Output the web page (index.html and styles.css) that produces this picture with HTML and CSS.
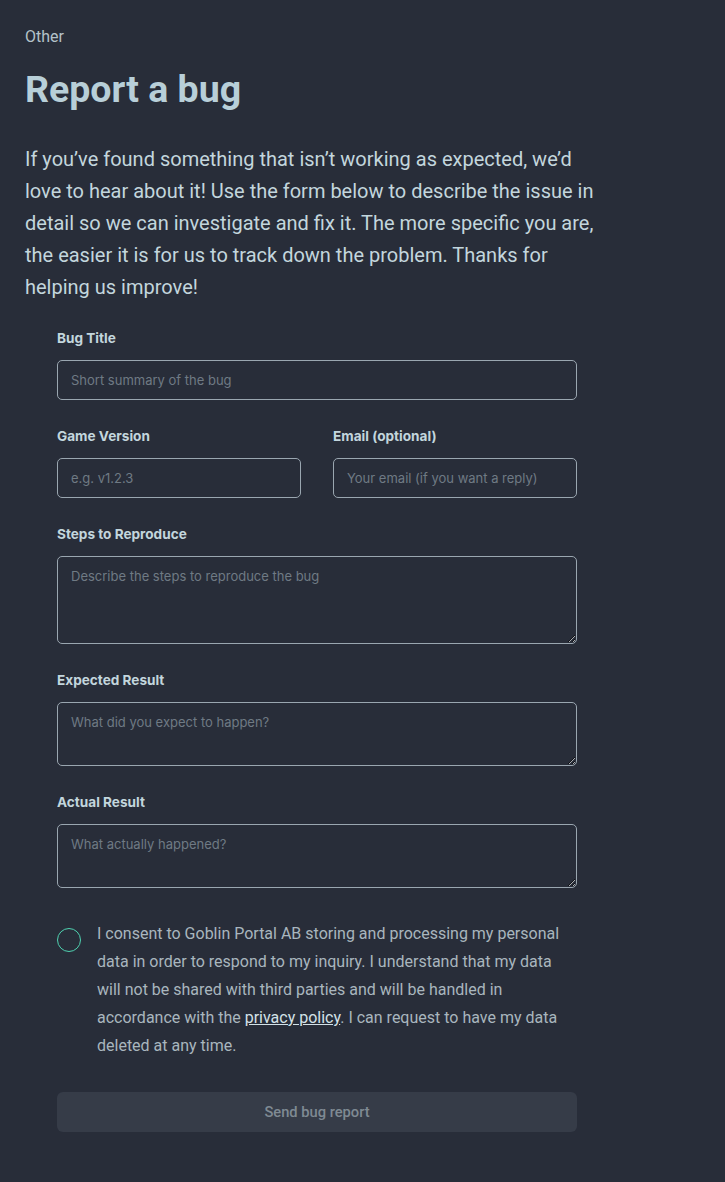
FILE: index.html
```html
<!DOCTYPE html>
<html lang="en">
<head>
<meta charset="utf-8">
<title>Report a bug</title>
<link rel="stylesheet" href="styles.css">
</head>
<body>
<main class="page">
  <p class="eyebrow">Other</p>
  <h1 class="title">Report a bug</h1>
  <p class="intro">If you’ve found something that isn’t working as expected, we’d love to hear about it! Use the form below to describe the issue in detail so we can investigate and fix it. The more specific you are, the easier it is for us to track down the problem. Thanks for helping us improve!</p>
  <form class="form">
    <div class="field">
      <label class="label" for="title">Bug Title</label>
      <input class="input" id="title" type="text" placeholder="Short summary of the bug">
    </div>
    <div class="row">
      <div class="field">
        <label class="label" for="version">Game Version</label>
        <input class="input" id="version" type="text" placeholder="e.g. v1.2.3">
      </div>
      <div class="field">
        <label class="label" for="email">Email (optional)</label>
        <input class="input" id="email" type="email" placeholder="Your email (if you want a reply)">
      </div>
    </div>
    <div class="field">
      <label class="label" for="steps">Steps to Reproduce</label>
      <textarea class="input area tall" id="steps" placeholder="Describe the steps to reproduce the bug"></textarea>
    </div>
    <div class="field">
      <label class="label" for="expected">Expected Result</label>
      <textarea class="input area" id="expected" placeholder="What did you expect to happen?"></textarea>
    </div>
    <div class="field">
      <label class="label" for="actual">Actual Result</label>
      <textarea class="input area" id="actual" placeholder="What actually happened?"></textarea>
    </div>
    <div class="consent">
      <span class="radio"></span>
      <p class="consent-text">I consent to Goblin Portal AB storing and processing my personal data in order to respond to my inquiry. I understand that my data will not be shared with third parties and will be handled in accordance with the <a href="#" class="link">privacy policy</a>. I can request to have my data deleted at any time.</p>
    </div>
    <button class="submit" type="button">Send bug report</button>
  </form>
</main>
</body>
</html>
```
FILE: styles.css
```css
html, body {
  margin: 0;
  padding: 0;
  background: #282d39;
}
body {
  font-family: Roboto, "Liberation Sans", sans-serif;
  color: #b8cfd8;
}
.page {
  padding: 27px 25px 50px 25px;
}
.eyebrow {
  margin: 0;
  font-size: 16px;
  line-height: 20px;
  color: #b4c2c9;
}
.title {
  margin: 20px 0 0 0;
  font-size: 37.5px;
  line-height: 44px;
  font-weight: 700;
  color: #b8cfd8;
}
.intro {
  margin: 32px 0 0 0;
  max-width: 580px;
  font-size: 20px;
  line-height: 32px;
  color: #c3d6dd;
}
.form {
  margin: 25px 0 0 32px;
  width: 520px;
  display: flex;
  flex-direction: column;
  gap: 26px;
}
.field {
  display: flex;
  flex-direction: column;
  gap: 12px;
}
.row {
  display: grid;
  grid-template-columns: 1fr 1fr;
  gap: 32px;
}
.label {
  font-family: Inter, "Liberation Sans", sans-serif;
  font-size: 13.6px;
  line-height: 20px;
  font-weight: 700;
  color: #c3d6dd;
}
.input {
  box-sizing: border-box;
  width: 100%;
  height: 40px;
  padding: 0 13px;
  background: transparent;
  border: 1px solid #9aa6b0;
  border-radius: 5px;
  font-family: Inter, "Liberation Sans", sans-serif;
  font-size: 13px;
  color: #c3d6dd;
  outline: none;
}
.input::placeholder {
  color: #6f7a84;
}
.area {
  height: 64px;
  padding: 9px 13px;
  line-height: 20px;
  resize: vertical;
  display: block;
}
.tall {
  height: 88px;
}
.consent {
  margin-top: 6px;
  display: flex;
  align-items: flex-start;
  gap: 16px;
}
.radio {
  flex: none;
  box-sizing: border-box;
  width: 24px;
  height: 24px;
  margin-top: 8px;
  border: 1.5px solid #4fd1b0;
  border-radius: 50%;
}
.consent-text {
  margin: 0;
  font-size: 16px;
  line-height: 28px;
  color: #a9b6be;
}
.link {
  color: #d4e2e8;
  text-decoration: underline;
}
.submit {
  margin-top: 6px;
  height: 40px;
  border: none;
  border-radius: 6px;
  background: #363c48;
  color: #7f8a93;
  font-family: Roboto, "Liberation Sans", sans-serif;
  font-size: 14.7px;
  font-weight: 500;
}
```
